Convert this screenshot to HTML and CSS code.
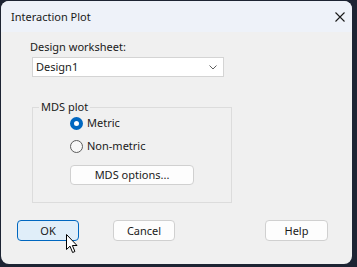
FILE: index.html
```html
<!DOCTYPE html>
<html lang="en">
<head>
    <meta charset="UTF-8">
    <title>Interaction Plot</title>
    <link rel="stylesheet" href="styles.css">
</head>
<body>
    <div class="window">
        <div class="titlebar">
            <span class="title">Interaction Plot</span>
            <svg class="close" width="10" height="10" viewBox="0 0 10 10">
                <path d="M0.5 0.5 L9.5 9.5 M9.5 0.5 L0.5 9.5" stroke="#1a1a1a" stroke-width="1.1" fill="none"/>
            </svg>
        </div>

        <div class="form">
            <div class="label">Design worksheet:</div>
            <div class="combo">
                <span>Design1</span>
                <svg class="chevron" width="8" height="5" viewBox="0 0 8 5">
                    <path d="M0.5 0.5 L4 4 L7.5 0.5" stroke="#606060" stroke-width="1" fill="none"/>
                </svg>
            </div>

            <fieldset class="group">
                <legend>MDS plot</legend>
                <div class="radio checked"><span class="dot"></span>Metric</div>
                <div class="radio"><span class="dot"></span>Non-metric</div>
                <button class="btn options">MDS options...</button>
            </fieldset>
        </div>

        <div class="buttons">
            <button class="btn default">OK</button>
            <button class="btn cancel">Cancel</button>
            <button class="btn help">Help</button>
        </div>

        <!-- mouse pointer over OK -->
        <svg class="cursor" width="13" height="20" viewBox="0 0 13 20">
            <path d="M0.5 0.5 L0.5 15.5 L4 12.2 L6.6 18.5 L8.9 17.5 L6.4 11.5 L11 11.5 Z" fill="#fff" stroke="#000" stroke-width="1" stroke-linejoin="round"/>
        </svg>
    </div>
</body>
</html>
```

FILE: styles.css
```css
body {
    margin: 0;
    background: #1d2433;
    font-family: 'Segoe UI', 'Noto Sans', sans-serif;
    font-size: 11px;
    line-height: 16px;
    color: #1a1a1a;
}

.window {
    position: relative;
    width: 351px;
    height: 263px;
    margin: 1px 0 0 1px;
    background: #f0f0f0;
    border-radius: 8px;
    overflow: hidden;
}

.titlebar {
    height: 31px;
    background: #eef2f9;
    display: flex;
    align-items: center;
    padding: 0 7px 0 10px;
}

.title {
    flex: 1;
}

.form {
    padding: 7px 0 0 31px;
}

.label {
    margin-left: -2px;
}

.combo {
    box-sizing: border-box;
    width: 192px;
    height: 20px;
    margin-top: 2px;
    background: #fff;
    border: 1px solid #d4d4d4;
    display: flex;
    align-items: center;
    justify-content: space-between;
    padding: 0 3px 0 3px;
}

.chevron {
    margin-right: 3px;
}

.group {
    box-sizing: border-box;
    width: 200px;
    margin: 22px 0 0 0;
    padding: 0 0 17px 37px;
    border: 1px solid #dcdcdc;
    min-width: 0;
}

.group legend {
    padding: 0 2px;
    margin-left: -31px;
}

.radio {
    display: flex;
    align-items: center;
    gap: 4px;
    height: 16px;
}

.radio + .radio {
    margin-top: 7px;
}

.dot {
    box-sizing: border-box;
    width: 13px;
    height: 13px;
    border-radius: 50%;
    border: 1px solid #5c5c5c;
    background: #f7f7f7;
}

.radio.checked .dot {
    border: 4px solid #0067c0;
    background: #fff;
}

.btn {
    box-sizing: border-box;
    height: 21px;
    padding: 0;
    font: inherit;
    color: #1a1a1a;
    background: #fdfdfd;
    border: 1px solid #d0d0d0;
    border-radius: 4px;
}

.options {
    display: block;
    width: 124px;
    height: 20px;
    margin-top: 11px;
}

.buttons {
    display: flex;
    margin-top: 17px;
    padding-left: 16px;
}

.default {
    width: 62px;
    background: #e0eef9;
    border-color: #0067c0;
}

.cancel {
    width: 62px;
    margin-left: 34px;
}

.help {
    width: 63px;
    margin-left: 90px;
}

.cursor {
    position: absolute;
    left: 65px;
    top: 233px;
}
```
